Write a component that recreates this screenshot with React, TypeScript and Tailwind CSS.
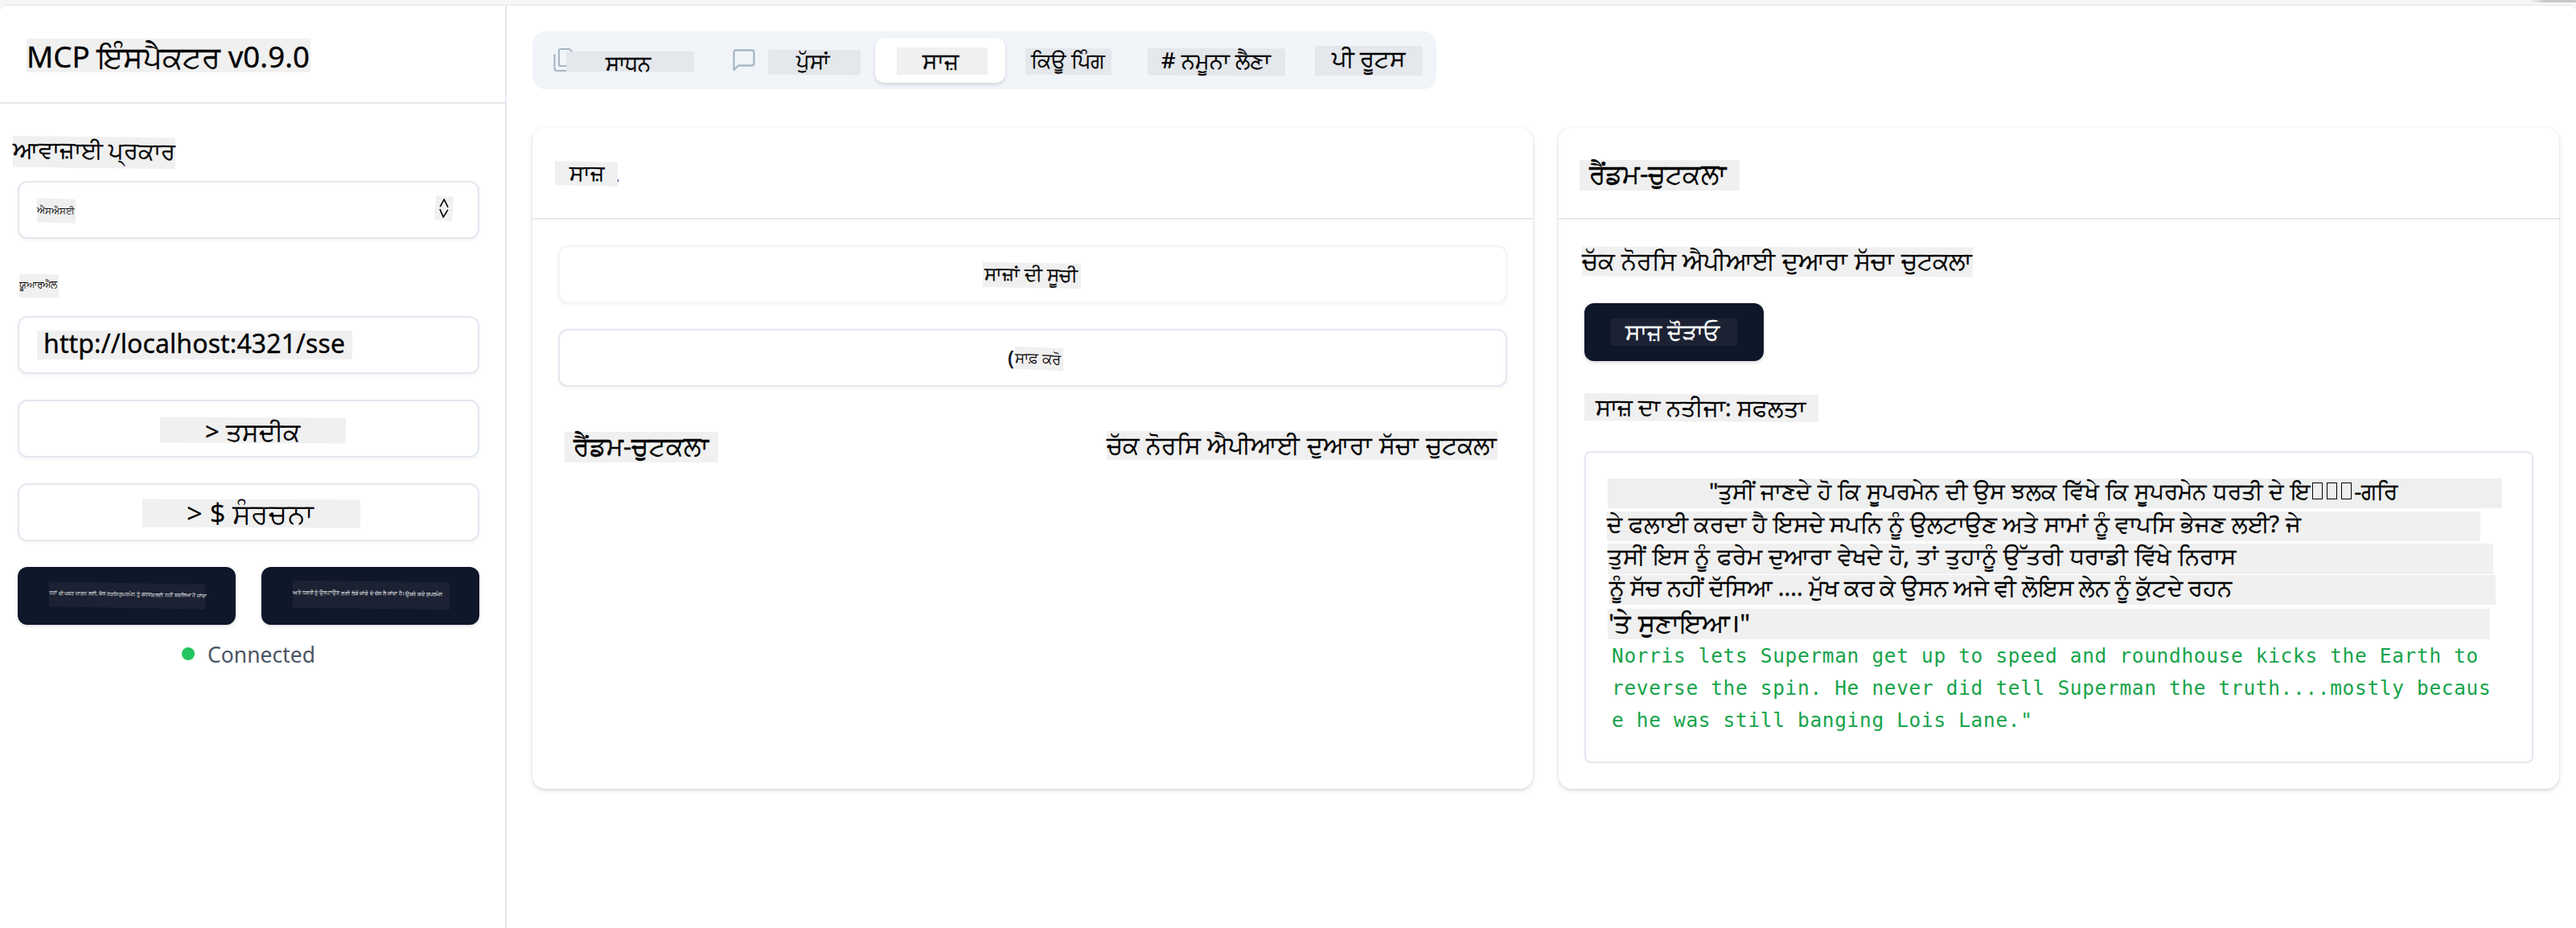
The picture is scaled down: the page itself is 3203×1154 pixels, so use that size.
import type { ReactNode } from "react";

type LabelProps = { box: string; text: string; children: ReactNode };

/** A shaded label: `box` sizes the plate, `text` sizes and offsets the words on it. */
function Label({ box, text, children }: LabelProps) {
  return (
    <div className={`flex shrink-0 items-start ${box}`}>
      <span className={`block whitespace-nowrap leading-none ${text}`}>{children}</span>
    </div>
  );
}

const frame = "flex h-[72px] w-full rounded-[12px] border-2 bg-white shadow-[0_2px_4px_rgba(0,0,0,0.05)]";
const field = `${frame} border-slate-200`;
const card = "flex h-[822px] w-[1244px] flex-col rounded-[16px] bg-white shadow-[0_2px_6px_rgba(0,0,0,0.12),0_1px_3px_rgba(0,0,0,0.08)]";
const inked = "[-webkit-text-stroke:0.35px_currentColor]";

function Sidebar() {
  return (
    <aside className="flex w-[630px] shrink-0 flex-col border-r-2 border-slate-200">
      <header className="h-[122px] border-b-2 border-gray-200 pl-[33px] pt-[41px]">
        <Label box="h-[42px] w-[353px] bg-[#f0f0f0]" text={`mt-[4px] text-[36.7px] ${inked}`}>
          MCP ਇੰਸਪੈਕਟਰ v0.9.0
        </Label>
      </header>
      <div className="flex flex-col pl-[22px] pr-[32px] pt-[41px]">
        <Label box="-ml-[6px] h-[39px] w-[202px] skew-y-[0.7deg] bg-[#f0f0f0]" text={`mt-[2px] text-[28.8px] ${inked}`}>
          ਆਵਾਜ਼ਾਈ ਪ੍ਰਕਾਰ
        </Label>
        <div className={`${field} mt-[16px] justify-between pl-[22px] pr-[31px]`}>
          <Label box="mt-[20px] h-[30px] w-[48px] skew-y-[2deg] bg-[#f0f0f0]" text="mt-[9px] text-[11.7px]">
            ਐਸਐਸਈ
          </Label>
          <div className="mt-[17px] flex h-[30px] w-[22px] rotate-[4deg] items-center justify-center bg-[#f0f0f0]">
            <svg className="h-[24px] w-[12px]" viewBox="0 0 12 24" fill="none" stroke="#000" strokeWidth="1.6">
              <path d="M1 10.5 5.5 1 11 10.5M1 13.5 6 23 11 13.5" />
            </svg>
          </div>
        </div>
        <Label box="ml-[2px] mt-[44px] h-[29px] w-[49px] bg-[#f0f0f0]" text="mt-[7px] text-[11.7px]">
          ਯੂਆਰਐਲ
        </Label>
        <div className={`${field} mt-[23px] pl-[22px] pt-[16px]`}>
          <Label box="h-[36px] w-[392px] bg-[#f0f0f0]" text={`ml-[8px] text-[32px] tracking-[0.1px] ${inked}`}>
            http://localhost:4321/sse
          </Label>
        </div>
        <button className={`${field} mt-[32px] pl-[175px] pt-[20px]`}>
          <Label box="h-[32px] w-[231px] skew-y-[0.2deg] bg-[#f0f0f0]" text={`mt-[2px] ml-[56px] text-[31px] ${inked}`}>
            &gt; ਤਸਦੀਕ
          </Label>
        </button>
        <button className={`${field} mt-[32px] pl-[153px] pt-[18px]`}>
          <Label box="h-[35px] w-[271px] skew-y-[0.2deg] bg-[#f0f0f0]" text="ml-[55px] text-[34.5px]">
            &gt; $ ਸੰਰਚਨਾ
          </Label>
        </button>
        <div className="mt-[32px] flex justify-between">
          <button className="flex h-[72px] w-[271px] rounded-[12px] bg-slate-900 pl-[39px] pt-[20px] shadow-[0_2px_4px_rgba(0,0,0,0.12)]">
            <Label box="h-[31px] w-[194px] skew-y-[1deg] bg-[#1c2233] text-white" text="mt-[11px] text-[6.4px]">
              ਤਰਾਂ ਦੀ ਖਬਰ ਜਾਣਨ ਲਈ, ਚੱਕ ਨੋਰਸਿ ਸੂਪਰਮੇਨ ਨੂੰ ਗਰਦਸ਼ ਲਈ ਨਹੀਂ ਬਦਲਿਆ ਹੋ ਜਾਂਦਾ
            </Label>
          </button>
          <button className="flex h-[72px] w-[271px] rounded-[12px] bg-slate-900 pl-[39px] pt-[18px] shadow-[0_2px_4px_rgba(0,0,0,0.12)]">
            <Label box="h-[34px] w-[195px] skew-y-[0.7deg] bg-[#1c2233] text-white" text="mt-[12px] text-[6.7px]">
              ਅਤੇ ਧਰਤੀ ਨੂੰ ਉਲਟਾਉਣ ਲਈ ਠੱਕੇ ਜਾਂਕੇ ਦੇ ਦੱਸ ਲੈ ਜਾਂਦਾ ਹੈ। ਉਸਨੇ ਕਦੇ ਸੁਪਰਮੇਨ
            </Label>
          </button>
        </div>
        <div className="mt-[20px] flex h-[32px] items-center pl-[204px]">
          <span className="size-[16px] rounded-full bg-[#22c55e]" />
          <span className="ml-[16px] mt-[2px] text-[26.5px] leading-none text-[#4b5563]">Connected</span>
        </div>
      </div>
    </aside>
  );
}

function Tabs() {
  return (
    <nav className="flex h-[72px] w-[1124px] items-start rounded-[16px] bg-slate-100">
      <div className="flex w-[227px] pl-[26px]">
        <svg className="mt-[20px] h-[32px] w-[28px] shrink-0" viewBox="0 0 28 32" fill="none" stroke="#a9b5c6" strokeWidth="2.2" strokeLinejoin="round" strokeLinecap="round">
          <path d="M9 2h11l6 6v13a2 2 0 0 1-2 2H9a2 2 0 0 1-2-2V4a2 2 0 0 1 2-2Z" />
          <path d="M1.500 9v17a3 3 0 0 0 3 3H17" />
        </svg>
        <Label box="z-10 -ml-[12px] mt-[25px] h-[25px] w-[159px] bg-[#e4e7eb]" text={`mt-[1px] ml-[49px] text-[26.4px] ${inked}`}>
          ਸਾਧਨ
        </Label>
      </div>
      <div className="flex w-[199px] pl-[22px]">
        <svg className="mt-[22px] h-[28px] w-[28px] shrink-0" viewBox="0 0 28 28" fill="none" stroke="#a9b5c6" strokeWidth="2.3" strokeLinejoin="round">
          <path d="M1.500 26V4a2.500 2.500 0 0 1 2.500-2.500h20A2.500 2.500 0 0 1 26.500 4v14a2.500 2.500 0 0 1-2.500 2.500H7Z" />
        </svg>
        <Label box="ml-[16px] mt-[23px] h-[31px] w-[115px] skew-y-[0.4deg] bg-[#e4e7eb]" text={`ml-[35px] text-[26px] ${inked}`}>
          ਪੁੱਸਾਂ
        </Label>
      </div>
      <div className="mt-[8px] flex h-[56px] w-[162px] rounded-[12px] bg-white pl-[27px] pt-[12px] shadow-[0_2px_4px_rgba(0,0,0,0.15)]">
        <Label box="h-[34px] w-[113px] bg-[#f0f0f0]" text={`mt-[2px] ml-[32px] text-[28px] ${inked}`}>
          ਸਾਜ਼
        </Label>
      </div>
      <Label box="ml-[25px] mt-[21px] h-[33px] w-[107px] skew-y-[0.5deg] bg-[#e4e7eb]" text={`mt-[2px] ml-[7px] text-[25.4px] ${inked}`}>
        ਕਿਊ ਪਿੰਗ
      </Label>
      <Label box="ml-[45px] mt-[21px] h-[34px] w-[171px] skew-y-[0.3deg] bg-[#e4e7eb]" text={`mt-[1px] ml-[17px] text-[27.2px] ${inked}`}>
        # ਨਮੂਨਾ ਲੈਣਾ
      </Label>
      <Label box="ml-[37px] mt-[18px] h-[37px] w-[134px] bg-[#e4e7eb]" text={`mt-[1px] ml-[21px] text-[28.6px] ${inked}`}>
        ਪੀ ਰੂਟਸ
      </Label>
    </nav>
  );
}

function ToolList() {
  return (
    <section className={card}>
      <header className="h-[114px] border-b-2 border-gray-200 pl-[28px] pt-[42px]">
        <div className="flex items-end">
          <Label box="h-[30px] w-[78px] skew-y-[1.3deg] bg-[#eff1f0]" text={`ml-[18px] text-[26.9px] ${inked}`}>
            ਸਾਜ਼
          </Label>
          <span className="mb-[5px] h-[3px] w-[1px] bg-blue-900" />
        </div>
      </header>
      <div className="flex flex-col px-[32px] pt-[32px]">
        <button className={`${frame} border-slate-100 pl-[526px] pt-[20px]`}>
          <Label box="h-[31px] w-[122px] skew-y-[1deg] bg-[#f0f0f0]" text={`mt-[2px] ml-[2px] text-[23px] ${inked}`}>
            ਸਾਜ਼ਾਂ ਦੀ ਸੂਚੀ
          </Label>
        </button>
        <button className={`${field} mt-[32px] pl-[556px] pt-[21px]`}>
          <span className="w-[10px] shrink-0 text-[25px] font-semibold leading-none text-slate-900">(</span>
          <Label box="z-10 h-[28px] w-[60px] skew-y-[2.5deg] bg-[#f0f0f0]" text="mt-[4px] text-[18.2px]">
            ਸਾਫ਼ ਕਰੋ
          </Label>
        </button>
        <div className="mt-[55px] flex items-start pl-[8px]">
          <Label box="mt-[1px] h-[38px] w-[191px] bg-[#f0f0f0]" text={`mt-[1px] ml-[11px] text-[31.6px] ${inked}`}>
            ਰੈਂਡਮ-ਚੁਟਕਲਾ
          </Label>
          <Label box="ml-[483px] h-[36px] w-[486px] bg-[#f0f0f0]" text={`mt-[2px] text-[30.4px] [word-spacing:0.8px] ${inked}`}>
            ਚੱਕ ਨੋਰਸਿ ਐਪੀਆਈ ਦੁਆਰਾ ਸੱਚਾ ਚੁਟਕਲਾ
          </Label>
        </div>
      </div>
    </section>
  );
}

const tofu = "mx-[2.7px] inline-block h-[21px] w-[13px] border border-black align-baseline";

function ToolResult() {
  return (
    <section className={card}>
      <header className="h-[114px] border-b-2 border-gray-200 pl-[26px] pt-[40px]">
        <Label box="h-[38px] w-[199px] bg-[#f0f0f0]" text={`mt-[1px] ml-[12px] text-[32.6px] ${inked}`}>
          ਰੈਂਡਮ-ਚੁਟਕਲਾ
        </Label>
      </header>
      <div className="flex flex-col items-start px-[32px] pt-[34px]">
        <Label box="-ml-[3px] h-[37px] w-[486px] skew-y-[0.1deg] bg-[#f0f0f0]" text={`mt-[2px] text-[30.4px] [word-spacing:0.8px] ${inked}`}>
          ਚੱਕ ਨੋਰਸਿ ਐਪੀਆਈ ਦੁਆਰਾ ਸੱਚਾ ਚੁਟਕਲਾ
        </Label>
        <button className="mt-[33px] flex h-[72px] w-[223px] rounded-[12px] bg-slate-900 pl-[33px] pt-[19px] shadow-[0_2px_4px_rgba(0,0,0,0.15)]">
          <Label box="h-[34px] w-[157px] bg-[#1c2233] text-white" text={`mt-[2px] ml-[18px] text-[28.2px] ${inked}`}>
            ਸਾਜ਼ ਦੌੜਾਓ
          </Label>
        </button>
        <Label box="mt-[41px] h-[34px] w-[291px] skew-y-[0.4deg] bg-[#f0f0f0]" text={`mt-[2px] ml-[14px] text-[28.8px] ${inked}`}>
          ਸਾਜ਼ ਦਾ ਨਤੀਜਾ: ਸਫਲਤਾ
        </Label>
        <div className="mt-[37px] flex h-[388px] w-full flex-col rounded-[8px] border-2 border-slate-200 pl-[26px] pt-[32px]">
          <Label box="ml-[1px] h-[37px] w-[1112px] bg-[#eef0ef]" text={`mt-[1px] ml-[126px] text-[28.15px] [word-spacing:0.65px] ${inked}`}>
            "ਤੁਸੀਂ ਜਾਣਦੇ ਹੋ ਕਿ ਸੂਪਰਮੇਨ ਦੀ ਉਸ ਝਲਕ ਵਿੱਖੇ ਕਿ ਸੂਪਰਮੇਨ ਧਰਤੀ ਦੇ ਇ
            <span className={tofu} />
            <span className={tofu} />
            <span className={tofu} />
            -ਗਰਿ
          </Label>
          <Label box="mt-[4px] h-[37px] w-[1086px] bg-[#f0f0f0]" text={`mt-[1px] text-[28.9px] [word-spacing:0.15px] ${inked}`}>
            ਦੇ ਫਲਾਈ ਕਰਦਾ ਹੈ ਇਸਦੇ ਸਪਨਿ ਨੂੰ ਉਲਟਾਉਣ ਅਤੇ ਸਾਮਾਂ ਨੂੰ ਵਾਪਸਿ ਭੇਜਣ ਲਈ? ਜੇ
          </Label>
          <Label box="ml-[1px] mt-[3px] h-[38px] w-[1101px] bg-[#f0f0f0]" text={`mt-[1px] text-[29.2px] [word-spacing:1px] ${inked}`}>
            ਤੁਸੀਂ ਇਸ ਨੂੰ ਫਰੇਮ ਦੁਆਰਾ ਵੇਖਦੇ ਹੋ, ਤਾਂ ਤੁਹਾਨੂੰ ਉੱਤਰੀ ਧਰਾਡੀ ਵਿੱਖੇ ਨਿਰਾਸ
          </Label>
          <Label box="ml-[3px] mt-[1px] h-[37px] w-[1102px] bg-[#f0f0f0]" text={`mt-[1px] text-[28.7px] [word-spacing:-0.5px] ${inked}`}>
            ਨੂੰ ਸੱਚ ਨਹੀਂ ਦੱਸਿਆ .... ਮੁੱਖ ਕਰ ਕੇ ਉਸਨ ਅਜੇ ਵੀ ਲੋਇਸ ਲੇਨ ਨੂੰ ਕੁੱਟਦੇ ਰਹਨ
          </Label>
          <Label box="ml-[1px] mt-[5px] h-[38px] w-[1097px] bg-[#f0f0f0]" text={`mt-[1px] ml-[1px] text-[31.6px] [word-spacing:2px] ${inked}`}>
            'ਤੇ ਸੁਣਾਇਆ।"
          </Label>
          <p className="ml-[6px] mt-[1px] whitespace-pre font-['DejaVu_Sans_Mono'] text-[24.5px] leading-[40px] tracking-[0.65px] text-[#16a34a]">
            {"Norris lets Superman get up to speed and roundhouse kicks the Earth to\nreverse the spin. He never did tell Superman the truth....mostly becaus\ne he was still banging Lois Lane.\""}
          </p>
        </div>
      </div>
    </section>
  );
}

export default function App() {
  return (
    <div className="flex h-[1154px] w-[3203px] flex-col overflow-hidden bg-[#f6f6f6] font-['Noto_Sans','Open_Sans',sans-serif] text-black">
      <div className="flex h-[6px] shrink-0 justify-end">
        <span className="h-[3px] w-[55px] bg-gradient-to-r from-[#f0f0f0] to-[#c8c8c8] to-30%" />
      </div>
      <div className="flex grow rounded-t-[8px] border-t border-[#e6e6e6] bg-white">
        <Sidebar />
        <main className="flex flex-col pl-[32px] pt-[32px]">
          <Tabs />
          <div className="mt-[48px] flex gap-[32px]">
            <ToolList />
            <ToolResult />
          </div>
        </main>
      </div>
    </div>
  );
}
